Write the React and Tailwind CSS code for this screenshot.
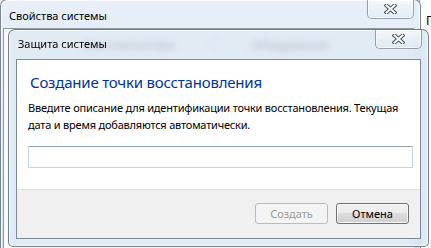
function CloseX() {
  return (
    <svg width="13" height="10" viewBox="0 0 13 10" className="block">
      <path d="M2.5 1.5 L10.5 8.5 M10.5 1.5 L2.5 8.5" stroke="#4b525c" strokeWidth="4" strokeLinecap="square" fill="none" />
      <path d="M2.5 1.5 L10.5 8.5 M10.5 1.5 L2.5 8.5" stroke="#ffffff" strokeWidth="2" strokeLinecap="square" fill="none" />
    </svg>
  );
}

function CloseButton() {
  return (
    <div className="flex items-center justify-center w-[47px] h-[19px] rounded-b-[5px] border border-t-0 border-[#6f7a88]/70 bg-gradient-to-b from-white/60 to-[#dfe8f2]/50 shadow-[inset_0_0_0_1px_rgba(255,255,255,0.6)]">
      <CloseX />
    </div>
  );
}

export default function App() {
  return (
    <div className="relative w-[431px] h-[248px] overflow-hidden bg-white font-['Noto_Sans','Liberation_Sans',sans-serif] text-black">
      {/* window behind, at right */}
      <div className="absolute left-[419px] top-0 w-[20px] h-[248px] bg-white border-l border-[#9aa3ad] pl-[6px] pt-[7px]">
        <span className="text-[12px] leading-[14px] text-black">Г</span>
      </div>

      {/* outer window: Свойства системы */}
      <div className="absolute left-0 top-[-1px] w-[421px] h-[262px] rounded-t-[7px] border border-[#4f5a66]/70 bg-gradient-to-b from-[#e8eff8] via-[#dde7f2] to-[#d2deeb] shadow-[inset_0_0_0_1px_rgba(255,255,255,0.7)] flex flex-col pl-[2px] pr-[6px]">
        <div className="h-[28px] flex justify-between items-start">
          <div className="pt-[9px] pl-[6px] text-[11px] leading-[14px] text-black">Свойства системы</div>
          <CloseButton />
        </div>
        <div className="flex-1 bg-[#f7f9fc] border-l border-t border-[#8d99a6] flex flex-col">
          <div className="flex items-end h-[24px] pl-[40px] text-[11px] text-[#222] blur-[1px]">
            <div className="w-[170px] text-center">Имя компьютера</div>
            <div className="w-px h-[14px] bg-[#888] mb-[2px]" />
            <div className="w-[150px] text-center">Оборудование</div>
          </div>
          <div className="mt-[195px] pl-[28px] text-[11px] leading-[12px] text-[#111]/70 blur-[1px]">Параметры</div>
        </div>
      </div>

      {/* inner dialog: Защита системы */}
      <div className="absolute left-[8px] top-[29px] w-[421px] h-[218px] rounded-t-[7px] rounded-b-[5px] border border-[#4f5a66]/75 bg-[#d9e5f2]/75 backdrop-blur-[3px] shadow-[inset_0_0_0_1px_rgba(255,255,255,0.65)] flex flex-col px-[7px] pb-[7px]">
        <div className="h-[29px] flex justify-between items-start -mr-[1px]">
          <div className="pt-[7px] pl-[2px] text-[11px] leading-[14px] text-black">Защита системы</div>
          <CloseButton />
        </div>

        {/* client area */}
        <div className="flex-1 border border-[#7d8996] bg-white flex flex-col">
          <div className="pt-[11px] pl-[13px] text-[15px] leading-[22px] tracking-[-0.2px] text-[#003399]">
            Создание точки восстановления
          </div>
          <div className="pt-[7px] pl-[11px] text-[11px] leading-[16.5px] tracking-[-0.2px] text-black whitespace-nowrap">
            Введите описание для идентификации точки восстановления. Текущая
            <br />
            дата и время добавляются автоматически.
          </div>
          <div className="mt-[13px] ml-[11px] w-[385px] h-[22px] border border-[#c2d6e8] border-t-[#8aa0b7] bg-white" />
          <div className="mt-[21px] flex-1 border-t border-[#dfdfdf] bg-[#f0f0f0] flex justify-end items-start gap-[8px] pt-[13px] pr-[11px]">
            <div className="w-[73px] h-[21px] rounded-[3px] border border-[#b7bcc0] bg-[#f4f4f4] text-[#9a9a9a] text-[11px] leading-none flex items-center justify-center">
              Создать
            </div>
            <div className="w-[73px] h-[21px] rounded-[3px] border border-[#707070] bg-[linear-gradient(#f2f2f2,#ebebeb_50%,#dddddd_50%,#cfcfcf)] shadow-[inset_0_0_0_1px_rgba(252,252,252,0.9)] text-black text-[11px] leading-none flex items-center justify-center">
              Отмена
            </div>
          </div>
        </div>
      </div>
    </div>
  );
}
